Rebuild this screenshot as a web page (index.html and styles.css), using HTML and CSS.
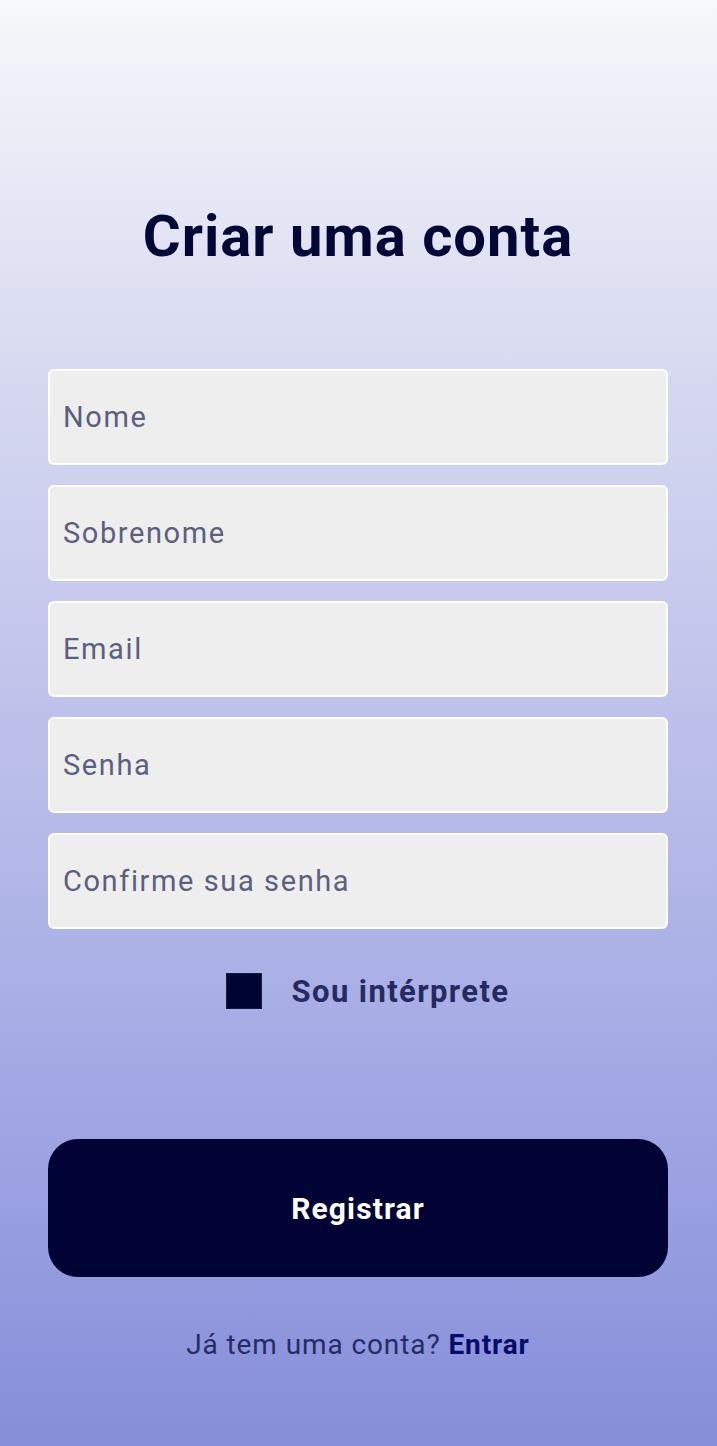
FILE: index.html
```html
<!DOCTYPE html>
<html lang="pt">
<head>
<meta charset="utf-8">
<title>Criar uma conta</title>
<link rel="stylesheet" href="styles.css">
</head>
<body>
<main class="page">
  <h1 class="title">Criar uma conta</h1>
  <form class="form">
    <div class="fields">
      <div class="field">Nome</div>
      <div class="field">Sobrenome</div>
      <div class="field">Email</div>
      <div class="field">Senha</div>
      <div class="field">Confirme sua senha</div>
    </div>
    <label class="check">
      <span class="box"></span>
      <span class="check-label">Sou intérprete</span>
    </label>
    <div class="button">Registrar</div>
    <p class="footer">Já tem uma conta? <span class="link">Entrar</span></p>
  </form>
</main>
</body>
</html>
```
FILE: styles.css
```css
html, body {
  margin: 0;
  padding: 0;
}
body {
  width: 717px;
  height: 1446px;
  background: linear-gradient(to bottom, #f8f9fc 0px, #f3f4f9 40px, #d8daf1 360px, #9fa5e3 1130px, #868ed9 1446px);
  font-family: Roboto, "Liberation Sans", sans-serif;
}
.page {
  padding: 0 49px 0 48px;
  display: flex;
  flex-direction: column;
}
.title {
  margin: 196px 0 0;
  text-align: center;
  font-size: 58px;
  font-weight: 700;
  line-height: 80px;
  letter-spacing: 1px;
  color: #020735;
}
.form {
  margin-top: 93px;
  display: flex;
  flex-direction: column;
}
.fields {
  display: flex;
  flex-direction: column;
  gap: 20px;
}
.field {
  box-sizing: border-box;
  height: 96px;
  border: 2px solid #ffffff;
  border-radius: 6px;
  background: #eeeeee;
  padding-left: 13px;
  display: flex;
  align-items: center;
  font-size: 29px;
  letter-spacing: 1.6px;
  color: #5c6080;
}
.check {
  margin-top: 44px;
  display: flex;
  align-items: center;
  justify-content: center;
  gap: 30px;
  height: 36px;
}
.box {
  width: 34px;
  height: 34px;
  background: #000433;
  border: 1px solid #1a1d3a;
  margin-left: 19px;
}
.check-label {
  font-size: 31px;
  font-weight: 700;
  letter-spacing: 1.4px;
  color: #252a60;
}
.button {
  margin-top: 130px;
  height: 138px;
  border-radius: 30px;
  background: #000333;
  color: #ffffff;
  font-size: 30px;
  font-weight: 700;
  letter-spacing: 1.1px;
  display: flex;
  align-items: center;
  justify-content: center;
}
.footer {
  margin: 48px 0 0;
  text-align: center;
  font-size: 28px;
  line-height: 40px;
  letter-spacing: 0.9px;
  color: #272c66;
}
.link {
  font-weight: 700;
  color: #090b6c;
}
```
